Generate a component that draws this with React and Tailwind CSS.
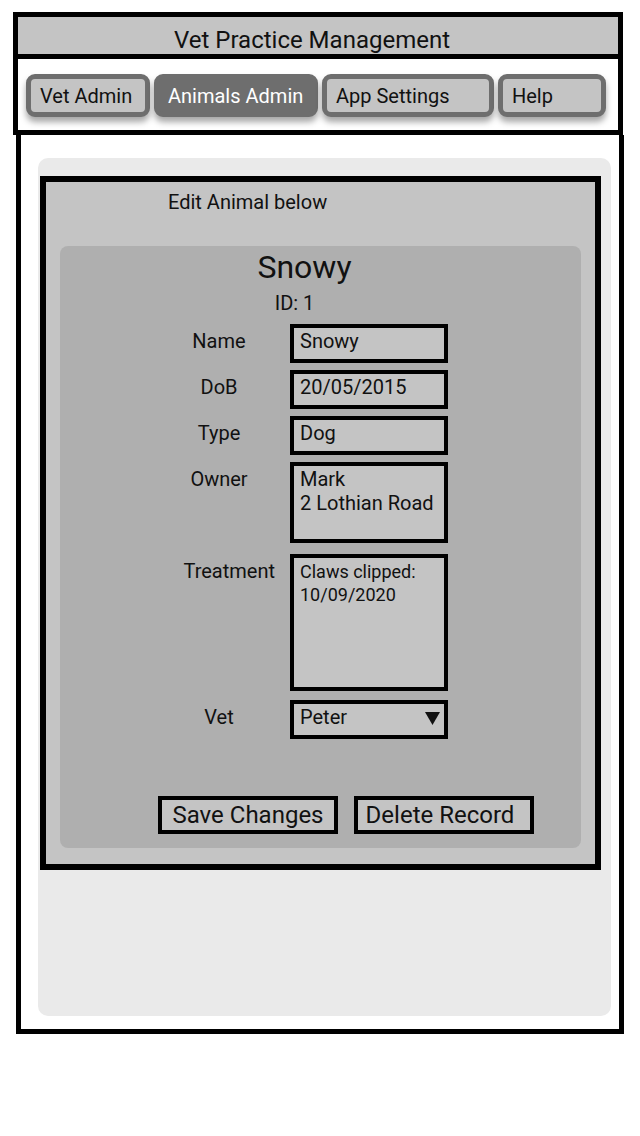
import React from 'react';

const navItems = [
  { label: 'Vet Admin', w: 'w-[124px]', active: false },
  { label: 'Animals Admin', w: 'w-[164px]', active: true },
  { label: 'App Settings', w: 'w-[172px]', active: false },
  { label: 'Help', w: 'w-[108px]', active: false },
];

const Field = ({ label, height, labelClass = '', children, mt = 'mt-[7px]', small }) => (
  <div className={`flex ${mt}`}>
    <div className={`w-[112px] pt-[5px] text-[20px] leading-[24px] text-center ${labelClass}`}>{label}</div>
    <div
      className={`ml-[15px] w-[158px] ${height} border-4 border-black bg-[#c4c4c4] pl-[6px] ${small ? 'text-[18px] leading-[23px] pt-[2px]' : 'text-[20px] leading-[24px] pt-[1px]'}`}
    >
      {children}
    </div>
  </div>
);

const App = () => {
  return (
    <div className="w-[640px] h-[1136px] bg-white text-[#111] font-['Roboto',sans-serif]">
      <div className="pt-[12px]">
        {/* header */}
        <div className="ml-[13px] w-[610px] border-[5px] border-black">
          <div className="h-[37px] bg-[#c4c4c4] flex items-center justify-center text-[24px] leading-[28px] pt-[8px] pr-[12px]">
            Vet Practice Management
          </div>
          <div className="h-[5px] bg-black" />
          <div className="h-[71px] flex items-start pt-[15px] pl-[8px] gap-[4px]">
            {navItems.map((n) => (
              <div
                key={n.label}
                className={`${n.w} h-[43px] rounded-[9px] border-[5px] border-[#6e6e6e] shadow-[0_5px_6px_rgba(0,0,0,0.35)] flex items-center pl-[9px] text-[20px] ${
                  n.active ? 'bg-[#6e6e6e] text-white' : 'bg-[#c4c4c4] text-[#111]'
                }`}
              >
                {n.label}
              </div>
            ))}
          </div>
        </div>

        {/* main */}
        <div className="ml-[16px] w-[608px] h-[899px] border-x-[5px] border-b-[5px] border-black pt-[23px] pl-[17px] pr-[8px]">
          <div className="h-[858px] rounded-[10px] bg-[#eaeaea] pt-[18px] pl-[2px] pr-[10px]">
            <div className="h-[694px] border-[6px] border-black bg-[#c4c4c4] px-[14px]">
              <div className="pt-[7px] pl-[108px] text-[20px] leading-[26px]">Edit Animal below</div>
              <div className="mt-[31px] h-[602px] rounded-[8px] bg-[#afafaf] pt-[3px]">
                <div className="text-center pr-[32px] text-[32px] leading-[36px]">Snowy</div>
                <div className="mt-[7px] text-center pr-[52px] text-[20px] leading-[22px]">ID: 1</div>

                <div className="pl-[103px] mt-[10px]">
                  <Field label="Name" height="h-[39px]" mt="mt-0">Snowy</Field>
                  <Field label="DoB" height="h-[39px]">20/05/2015</Field>
                  <Field label="Type" height="h-[39px]">Dog</Field>
                  <Field label="Owner" height="h-[81px]">
                    Mark
                    <br />
                    2 Lothian Road
                  </Field>
                  <Field label="Treatment" height="h-[137px]" labelClass="text-right" mt="mt-[11px]" small>
                    Claws clipped:
                    <br />
                    10/09/2020
                  </Field>
                  <Field label="Vet" height="h-[39px]" mt="mt-[9px]">
                    <div className="flex items-center justify-between pr-[4px]">
                      <span>Peter</span>
                      <svg width="15" height="13" viewBox="0 0 15 13" className="mt-[2px]">
                        <polygon points="0,0 15,0 7.5,13" fill="#111" />
                      </svg>
                    </div>
                  </Field>
                </div>

                <div className="mt-[57px] pl-[98px] flex gap-[16px]">
                  <div className="w-[180px] h-[38px] border-4 border-black bg-[#c4c4c4] flex items-center justify-center text-[24px]">
                    Save Changes
                  </div>
                  <div className="w-[180px] h-[38px] border-4 border-black bg-[#c4c4c4] flex items-center justify-center text-[24px] pr-[8px]">
                    Delete Record
                  </div>
                </div>
              </div>
            </div>
          </div>
        </div>
      </div>
    </div>
  );
};

export default App;
